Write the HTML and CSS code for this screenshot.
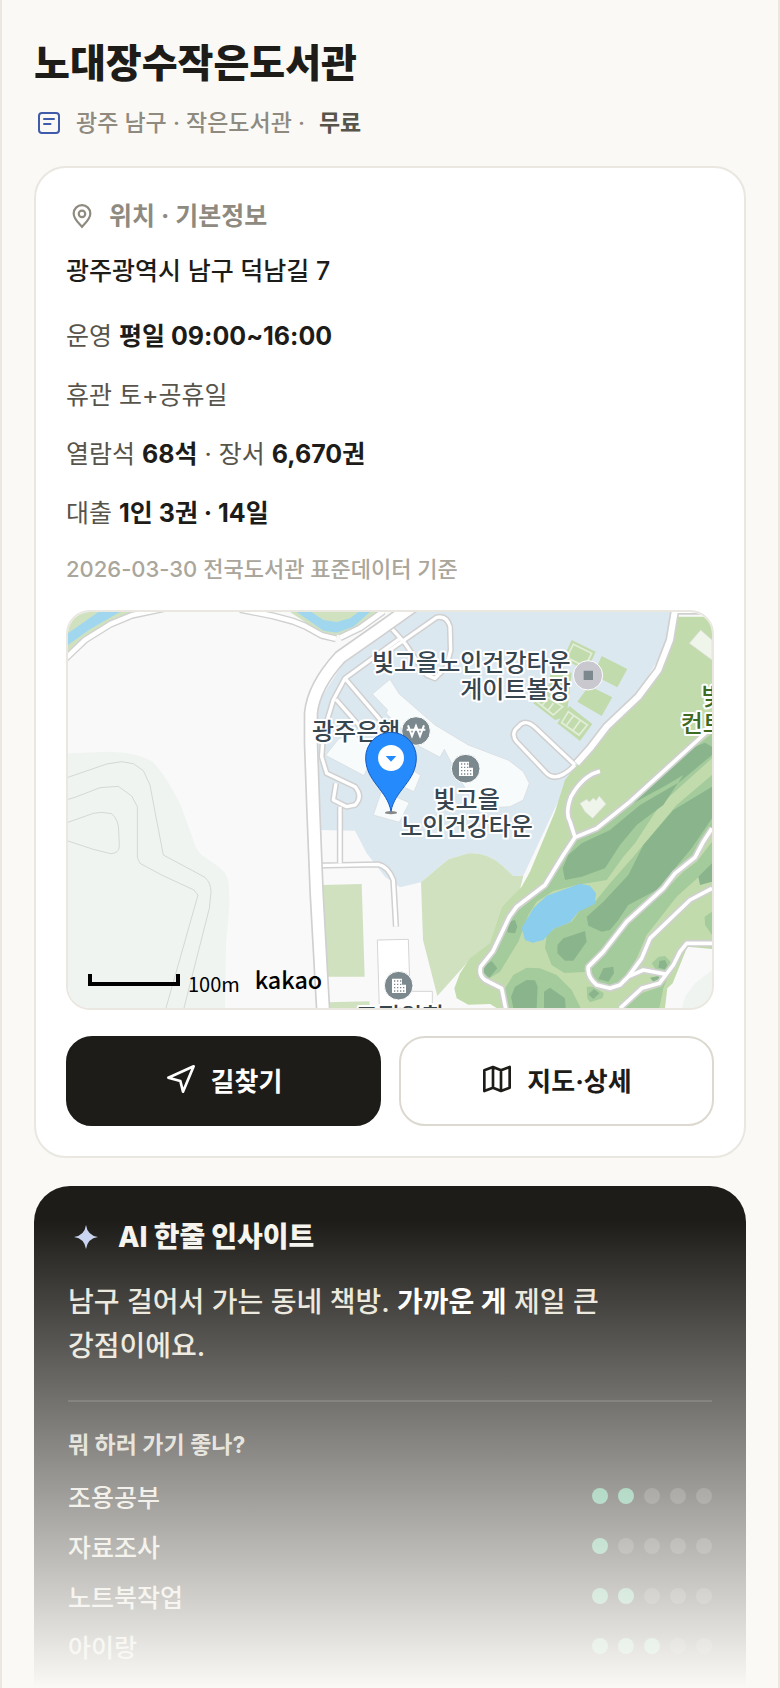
FILE: index.html
```html
<!DOCTYPE html>
<html lang="ko">

<head>
    <meta charset="UTF-8" />
    <meta name="viewport" content="width=device-width, initial-scale=1.0" />
    <title>노대장수작은도서관</title>
    <link rel="stylesheet" href="styles.css">
</head>

<body>
    <main class="page">
        <header class="header">
            <h1 class="title">노대장수작은도서관</h1>
            <p class="meta">
                <svg class="meta-icon" viewBox="0 0 26 26" aria-hidden="true">
                    <rect x="3" y="3" width="20" height="20" rx="3" />
                    <path d="M8 9h10M8 14h6.500" />
                </svg>
                <span>광주 남구 · 작은도서관 ·</span>
                <strong>무료</strong>
            </p>
        </header>

        <section class="card">
            <h2 class="card-head">
                <svg class="pin-icon" viewBox="0 0 24 24" aria-hidden="true">
                    <path d="M12 22c-2-2.500-7.700-7-7.700-12.300a7.700 7.700 0 0 1 15.400 0C19.700 15 14 19.500 12 22z" />
                    <circle cx="12" cy="10" r="3" />
                </svg>
                위치 · 기본정보
            </h2>
            <p class="address">광주광역시 남구 덕남길 7</p>
            <p class="row">운영 <b>평일 09:00~16:00</b></p>
            <p class="row">휴관 토+공휴일</p>
            <p class="row">열람석 <b>68석</b> · 장서 <b>6,670권</b></p>
            <p class="row">대출 <b>1인 3권 · 14일</b></p>
            <p class="note">2026-03-30 전국도서관 표준데이터 기준</p>

            <div class="map">
                <svg viewBox="24 36 1932 1188" preserveAspectRatio="xMidYMid slice" role="img" aria-label="지도">
                    <!-- land -->
                    <rect x="24" y="36" width="1932" height="1188" fill="#f9f9f9" />
                    <path fill="#eff4f1" d="M24 460L150 455Q240 458 280 487Q320 530 362 615L395 705Q405 745 425 765L480 803Q507 825 507 860L508 915L498 1035L495 1224H24z" />
                    <g class="contour">
                        <path d="M24 532L140 492L185 485L220 491L250 512L270 555L284 630L310 765L435 832Q453 850 453 875L448 925L372 1224" />
                        <path d="M24 598L45 592L120 563L175 559L215 588L232 620V772L240 790L305 825L402 870L414 885L318 1224" />
                        <path d="M24 667L100 640L125 637L155 641Q176 660 176 690L178 740Q176 760 152 761L100 748L24 723" />
                    </g>
                    <path fill="#d0e1c0" d="M24 36H215L130 75L70 118L24 162zM690 36H965L895 84L830 106L780 96z" />
                    <path fill="#a0d7ee" d="M24 100L115 36H180L90 88L24 135zM710 36H755L790 60L830 66L870 55L895 36H930L880 80L830 98L790 92z" />

                    <!-- town -->
                    <path fill="#dce8f0" d="M1050 36H1850L1840 100L1740 270L1550 495L1485 625L1390 827L1360 828L1325 795Q1280 755 1225 760L1165 778L1083 847L1020 862L975 830L920 760L885 692L775 690L772 310L850 190L990 80z" />
                    <g class="building">
                        <path d="M937 282L990 238L1018 282L1125 375L1225 435L1346 481L1390 515L1408 550L1390 600L1350 620L1250 625L1190 520L1153 448L1140 472L1080 440L1020 380L978 340L983 330z" />
                        <path d="M835 418L797 466L912 527L950 440L870 400z" />
                        <path d="M1060 512L1082 526L1062 575L1020 556zM965 572L1048 608L1018 667L940 645z" />
                    </g>

                    <!-- park and golf course -->
                    <path fill="#d0e1c0" d="M788 855L905 852L914 1130H798zM804 1207L928 1204L930 1224H805zM1083 847L1165 778L1225 760Q1280 755 1325 795L1360 828L1390 827L1380 868L1325 920L1290 1035L1220 1090L1132 1188L1089 1020z" />
                    <path fill="#c2dbac" d="M1852 50H1956V1224H1310L1290 1212L1225 1214L1190 1195L1183 1165L1200 1120L1230 1075L1290 1030L1325 920L1385 860L1410 815L1485 635L1515 540L1550 495L1640 400L1760 260L1820 140z" />
                    <g transform="translate(990 615)">
                        <g fill="#a4cb9c">
                            <path d="M560 105L620 78L700 5L966-215V-140L810 0L735 115L700 155L650 225L560 240L490 258L440 290L415 330L385 410L330 500L295 522L275 495L315 440L362 335L465 250L518 160z" />
                            <path d="M860 0L966-90V70L915 157L820 250L710 350L640 440L593 484L600 500L523 504L485 480L465 430L470 390L495 370L545 350L570 315L615 290L660 235L730 155z" />
                            <path d="M966 110V180L860 275L770 390L740 460L710 510L680 545L610 530L600 490L720 350L830 250L880 200L920 170zM966 320V390L945 360L944 335z" />
                            <path d="M348 609L345 550L370 510L410 488L450 490L500 510L545 555L572 609zM690 609L740 570L810 545L832 520L820 550L808 609zM785 475L805 456L825 453L842 470L835 500L800 498zM590 545L610 545L642 565L637 580L600 592L592 580z" />
                        </g>
                        <g fill="#8ab58c">
                            <path d="M535 150L575 115L660 75L750 0L870-70L966-150V-175L945-187L890-165L790-65L720 0L820 0L740 60L690 120L645 190L575 215L525 225L518 190zM720 0L830-60L880-90L820 0z" />
                            <path d="M850 15L966-55V40L905 130L800 255L715 300L685 345L660 375L635 380L595 362L590 335L640 290L715 210L760 120z" />
                            <path d="M502 420L520 400L585 378L590 410L550 467H525L502 445zM370 609L363 575L375 545L410 525L435 526L443 545L440 609zM462 609V560L480 548L525 580L527 609zM966 175V230L930 240L925 215zM355 350L375 345L382 365L375 385L352 382zM285 480L305 468L322 490L298 518L280 502zM640 490L670 485L672 505L655 530L625 522zM808 468L825 465L832 480L825 493L805 488zM780 518L805 513L810 520L790 530zM595 568L612 552L628 565L610 582z" />
                        </g>
                        <path fill="#8acdec" d="M395 370L430 310L470 272L570 236L600 242L618 265L614 297L565 320L540 352L490 372L460 405L428 413L405 405z" />
                        <path fill="#f9f9f9" d="M892 425L966 432V609H825L832 550L848 535z" />
                        <path fill="#eff4f1" d="M966 495L915 535L885 575L876 609H966z" />
                    </g>
                    <g class="pitch" transform="translate(990 0)">
                        <path d="M545 120L617 155L590 215L520 175zM635 168L712 207L682 262L610 225zM597 257L667 292L635 348L562 305zM480 180L545 220L530 350L495 360L430 310L480 250zM538 318L607 372L570 423L502 370z" />
                        <path class="pitch-line" d="M550 133L605 160L585 200L530 172zM535 335L592 375L567 405L515 368zM552 345L530 375M572 360L550 390M440 305L490 345L518 320L470 290M468 302L455 318M490 310L475 330" />
                    </g>
                    <path fill="#eff5ea" stroke="#dddddd" stroke-width="2" d="M1888 130L1922 90L1956 120V180zM1560 610L1580 598L1588 606L1600 594L1608 602L1618 588L1638 612L1598 655L1575 635z" />

                    <!-- roads -->
                    <defs>
                        <g id="lanes">
                            <path d="M990 80L1035 130M990 150L1130 52Q1160 45 1170 80L1172 150L1160 200L1125 235L1100 225L1035 130M1020 115L855 235L820 300L790 400L785 470L800 520L885 560Q910 590 885 615L860 620L820 600L828 550M855 235L970 370M828 298L900 380M840 620V790M765 797L955 793Q985 800 1000 840L1008 980" />
                            <path d="M1545 495L1425 382Q1395 355 1375 380Q1350 400 1370 425L1460 520Q1490 550 1545 495" />
                        </g>
                        <g id="paths">
                            <path d="M1620 514Q1570 525 1533 590Q1515 640 1530 665L1545 712M1956 380L1930 405L1710 605L1610 685L1545 712L1510 765L1455 855L1370 920L1348 950L1298 1055L1262 1100Q1255 1125 1275 1140L1325 1165L1338 1230" />
                            <path d="M1956 685L1930 725L1905 772L1845 820L1810 865L1700 965L1630 1055L1585 1100Q1580 1130 1610 1155L1650 1165L1680 1155L1705 1130L1745 1075L1770 1015L1890 900L1956 865" />
                            <path d="M1956 1030H1880L1860 1055L1840 1095L1798 1150L1745 1165L1680 1225M1705 1130L1750 1110L1820 1123" />
                        </g>
                        <g id="streets">
                            <path d="M10 182L75 120L152 72L215 46L310 26M540 28L640 48L700 64L735 78L785 106L828 116" />
                            <path d="M840 113L900 84L970 34" />
                        </g>
                    </defs>
                    <g class="road">
                        <use href="#streets" class="casing" stroke-width="22" />
                        <use href="#streets" class="fill" stroke-width="14" />
                        <use href="#lanes" class="casing" stroke-width="19" />
                        <use href="#lanes" class="fill" stroke-width="10" />
                        <use href="#paths" class="casing" stroke-width="21" />
                        <use href="#paths" class="fill" stroke-width="11" />
                        <path class="casing" stroke-width="44" d="M1070 10L960 88L840 172Q760 260 753 340V430L760 630L770 880L790 1240" />
                        <path class="fill" stroke-width="34" d="M1070 10L960 88L840 172Q760 260 753 340V430L760 630L770 880L790 1240" />
                        <path class="casing" stroke-width="28" d="M1970 30H1845L1830 120L1795 210L1735 290L1640 380L1590 445L1550 490" />
                        <path class="fill" stroke-width="18" d="M1970 30H1845L1830 120L1795 210L1735 290L1640 380L1590 445L1550 490" />
                    </g>
                    <path fill="#fff" stroke="#d5d5d5" stroke-width="3" d="M952 1020L1045 1018L1050 1174H1117V1224H958z" />

                    <!-- places -->
                    <g class="label">
                        <text x="1532" y="214" text-anchor="end">빛고을노인건강타운</text>
                        <text x="1532" y="293" text-anchor="end">게이트볼장</text>
                        <text x="756" y="420">광주은행</text>
                        <text x="1220" y="623" text-anchor="middle">빛고을</text>
                        <text x="1220" y="704" text-anchor="middle">노인건강타운</text>
                        <text x="1020" y="1276" text-anchor="middle">교직원회</text>
                        <g fill="#3d6b21">
                            <text x="1924" y="316">빛고을</text>
                            <text x="1862" y="396">컨트리클럽</text>
                        </g>
                    </g>
                    <g class="place">
                        <circle cx="1584" cy="226" r="44" fill="#c9c8ce" />
                        <path fill="#7b898f" d="M1571 212h28v28h-28z" />
                        <circle cx="1068" cy="393" r="43" fill="#7b898f" />
                        <path fill="none" stroke="#fff" stroke-width="6" d="M1044 376L1056 408L1068 378L1080 408L1092 376M1040 389H1096" />
                        <circle cx="1217" cy="506" r="43" fill="#7b898f" />
                        <path fill="#fff" d="M1197 485H1227V503H1239V528H1197z" />
                        <path class="windows" d="M1203 492H1225M1203 502H1225M1203 512H1236M1203 522H1236" />
                        <circle cx="1016" cy="1157" r="43" fill="#7b898f" />
                        <path fill="#fff" d="M996 1136H1026V1154H1038V1179H996z" />
                        <path class="windows" d="M1002 1143H1024M1002 1153H1024M1002 1163H1035M1002 1173H1035" />
                    </g>

                    <!-- marker -->
                    <ellipse cx="993" cy="638" rx="18" ry="5" fill="#555" opacity=".7" />
                    <path fill="#258bfc" stroke="#1659c0" stroke-width="3" d="M993 634C982 570 917 545 917 473a76 76 0 0 1 152 0C1069 545 1004 570 993 634z" />
                    <circle cx="993" cy="474" r="39" fill="#fff" />
                    <path fill="#258bfc" d="M977 468H1009L993 485z" />

                    <path fill="none" stroke="#000" stroke-width="12" d="M90 1122V1152H354V1122" />
                    <text class="scale" x="384" y="1176">100m</text>
                    <text class="brand" x="584" y="1168">kakao</text>
                </svg>
            </div>

            <div class="actions">
                <button type="button" class="btn btn-dark">
                    <svg viewBox="0 0 24 24" aria-hidden="true"><path d="M2.500 11L21.500 2.500L13.500 21.500L11.500 13.500z" /></svg>
                    길찾기
                </button>
                <button type="button" class="btn">
                    <svg viewBox="0 0 24 24" aria-hidden="true"><path d="M2.500 5.500L9 3L15 5.500L21.500 3V18.500L15 21L9 18.500L2.500 21zM9 3V18.500M15 5.500V21" /></svg>
                    지도·상세
                </button>
            </div>
        </section>

        <section class="insight">
            <h2 class="insight-head">
                <svg viewBox="0 0 24 24" aria-hidden="true"><path d="M12 0Q13.500 10.500 24 12Q13.500 13.500 12 24Q10.500 13.500 0 12Q10.500 10.500 12 0z" /></svg>
                AI 한줄 인사이트
            </h2>
            <p class="summary">남구 걸어서 가는 동네 책방. <b>가까운 게</b> 제일 큰 강점이에요.</p>
            <h3 class="question">뭐 하러 가기 좋나?</h3>
            <ul class="scores">
                <li>조용공부 <span class="dots"><i class="on"></i><i class="on"></i><i></i><i></i><i></i></span></li>
                <li>자료조사 <span class="dots"><i class="on"></i><i></i><i></i><i></i><i></i></span></li>
                <li>노트북작업 <span class="dots"><i class="on"></i><i class="on"></i><i></i><i></i><i></i></span></li>
                <li>아이랑 <span class="dots"><i class="on"></i><i class="on"></i><i class="on"></i><i></i><i></i></span></li>
            </ul>
        </section>
        <div class="fade"></div>
    </main>
</body>

</html>
```
FILE: styles.css
```css
* {
    box-sizing: border-box;
    margin: 0;
    padding: 0;
}

body {
    background: #faf9f6;
    color: #1d1c18;
    font-family: Inter, "Noto Sans CJK KR", sans-serif;
    font-size: 25px;
}

.page {
    position: relative;
    display: flex;
    flex-direction: column;
    min-height: 100vh;
    padding: 35px 32px 0;
    border-left: 2px solid #e9e7e0;
    border-right: 2px solid #e9e7e0;
    overflow: hidden;
}

.title {
    font-size: 39px;
    line-height: 56px;
    font-weight: 800;
}

.meta {
    display: flex;
    align-items: center;
    gap: 14px;
    margin: 15px 0 26px;
    color: #8e8a7f;
    font-size: 23px;
    line-height: 34px;
    font-weight: 500;
}

.meta strong {
    color: #57544b;
    font-weight: 700;
}

.meta-icon {
    width: 26px;
    height: 26px;
    margin-left: 2px;
    fill: none;
    stroke: #3f5ba9;
    stroke-width: 2;
    stroke-linecap: round;
}

.card {
    padding: 30px;
    background: #fff;
    border: 2px solid #e9e7e0;
    border-radius: 32px;
}

.card-head {
    display: flex;
    align-items: center;
    gap: 14px;
    color: #8e8a7f;
    font-size: 25px;
    line-height: 36px;
    font-weight: 700;
}

.pin-icon {
    width: 26px;
    height: 26px;
    margin-left: 3px;
    fill: none;
    stroke: currentColor;
    stroke-width: 2;
}

.address {
    margin: 18px 0 26px;
    line-height: 38px;
    font-weight: 500;
}

.row {
    margin-bottom: 19px;
    color: #57544b;
    line-height: 40px;
}

.row b {
    color: #1d1c18;
    font-weight: 700;
}

.note {
    margin-bottom: 24px;
    color: #aaa69b;
    font-size: 22px;
    line-height: 34px;
    font-weight: 500;
}

.map {
    aspect-ratio: 648 / 400;
    border: 2px solid #e9e7e0;
    border-radius: 24px;
    overflow: hidden;
}

.map svg {
    display: block;
    width: 100%;
    height: 100%;
}

.contour {
    fill: none;
    stroke: #d3d8d4;
    stroke-width: 3;
}

.building {
    fill: #f7fbfc;
    stroke: #d5d9dc;
    stroke-width: 2;
}

.pitch {
    fill: #c2dbac;
}

.pitch-line {
    fill: none;
    stroke: #e3eeda;
    stroke-width: 5;
}

.road {
    fill: none;
    stroke-linejoin: round;
}

.casing {
    stroke: #d0d0d0;
}

.fill {
    stroke: #fff;
}

.place circle {
    stroke: #fff;
    stroke-width: 3;
}

.windows {
    stroke: #7b898f;
    stroke-width: 4;
    stroke-dasharray: 4 5;
}

.label {
    fill: #37454e;
    stroke: #fff;
    stroke-width: 12;
    stroke-linejoin: round;
    paint-order: stroke;
    font-family: "Noto Sans CJK KR", sans-serif;
    font-size: 72px;
    font-weight: 500;
}

.scale,
.brand {
    font-family: "Noto Sans CJK KR", sans-serif;
}

.scale {
    font-size: 60px;
}

.brand {
    font-size: 70px;
    font-weight: 500;
}

.actions {
    display: flex;
    gap: 18px;
    margin-top: 26px;
}

.btn {
    display: flex;
    flex: 1;
    align-items: center;
    justify-content: center;
    gap: 14px;
    height: 90px;
    padding-bottom: 4px;
    background: #fff;
    color: #1d1c18;
    border: 2px solid #dcd9d0;
    border-radius: 26px;
    font-family: inherit;
    font-size: 26px;
    font-weight: 700;
}

.btn-dark {
    background: #1d1c18;
    border-color: #1d1c18;
    color: #fff;
}

.btn svg {
    width: 32px;
    height: 32px;
    fill: none;
    stroke: currentColor;
    stroke-width: 2;
    stroke-linejoin: round;
}

.insight {
    flex: 1;
    margin-top: 28px;
    padding: 31px 34px 0;
    background: #1d1c18;
    border-radius: 36px 36px 0 0;
    color: #f6f4ee;
}

.insight-head {
    display: flex;
    align-items: center;
    gap: 20px;
    font-size: 28px;
    line-height: 40px;
    font-weight: 800;
}

.insight-head svg {
    width: 24px;
    height: 24px;
    margin-left: 6px;
    fill: #c8d3f0;
}

.summary {
    margin-top: 23px;
    padding-bottom: 32px;
    border-bottom: 2px solid #3b3a36;
    color: #e9e5da;
    font-size: 28px;
    line-height: 44px;
    font-weight: 500;
    word-break: keep-all;
}

.summary b {
    color: #fff;
    font-weight: 700;
}

.question {
    margin-top: 26px;
    color: #d5d1c6;
    font-size: 23px;
    line-height: 34px;
    font-weight: 700;
}

.scores {
    margin-top: 9px;
    list-style: none;
}

.scores li {
    display: flex;
    align-items: center;
    justify-content: space-between;
    height: 50px;
    color: #e9e5da;
    font-weight: 500;
}

.dots {
    display: flex;
    gap: 10px;
}

.dots i {
    width: 16px;
    height: 16px;
    border-radius: 50%;
    background: #42413d;
}

.dots .on {
    background: #56b187;
}

.fade {
    position: absolute;
    left: -2px;
    right: -2px;
    bottom: 0;
    height: 468px;
    background: linear-gradient(rgba(250, 249, 246, 0), #faf9f6);
    pointer-events: none;
}
```
